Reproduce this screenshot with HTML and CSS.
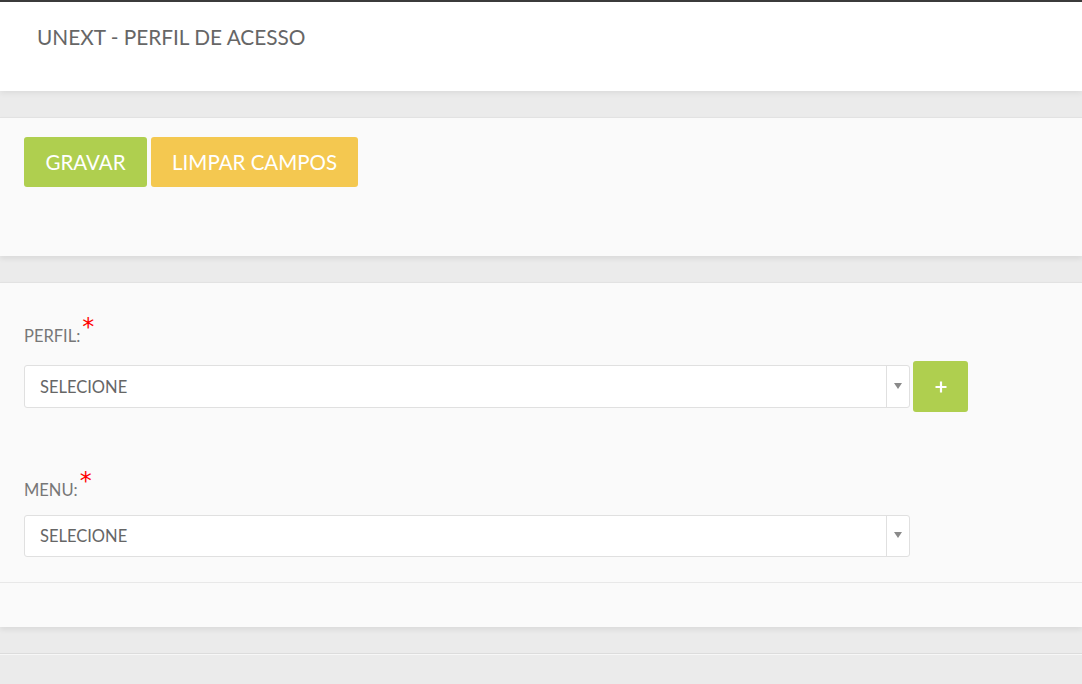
FILE: index.html
```html
<!DOCTYPE html>
<html lang="pt-BR">
<head>
<meta charset="utf-8">
<title>UNEXT - Perfil de Acesso</title>
<link rel="stylesheet" href="styles.css">
</head>
<body>
  <header class="topbar">
    <h1 class="title">UNEXT - PERFIL DE ACESSO</h1>
  </header>

  <main class="main">
    <section class="panel panel-actions">
      <div class="actions">
        <button class="btn btn-green">GRAVAR</button>
        <button class="btn btn-yellow">LIMPAR CAMPOS</button>
      </div>
    </section>

    <section class="panel panel-form">
      <div class="form-body">
        <div class="group group-perfil">
          <label class="label">PERFIL:<span class="req">*</span></label>
          <div class="row">
            <div class="select">
              <span class="select-text">SELECIONE</span>
              <span class="select-arrow"><span class="tri"></span></span>
            </div>
            <button class="btn-add" aria-label="Adicionar">
              <svg width="12" height="12" viewBox="0 0 12 12"><path d="M6 0.5V11.5M0.5 6H11.5" stroke="#fff" stroke-width="2.2" fill="none"/></svg>
            </button>
          </div>
        </div>
        <div class="group group-menu">
          <label class="label">MENU:<span class="req">*</span></label>
          <div class="row">
            <div class="select">
              <span class="select-text">SELECIONE</span>
              <span class="select-arrow"><span class="tri"></span></span>
            </div>
          </div>
        </div>
      </div>
      <div class="form-footer"></div>
    </section>

    <div class="panel-bottom"></div>
  </main>
</body>
</html>
```

FILE: styles.css
```css
* { box-sizing: border-box; }

html, body {
  margin: 0;
  padding: 0;
}

body {
  background: #ebebeb;
  font-family: "Lato", "Open Sans", sans-serif;
  height: 684px;
  overflow: hidden;
}

.topbar {
  position: relative;
  z-index: 2;
  background: #fff;
  border-top: 2px solid #3b3b3b;
  height: 91px;
  padding: 23px 0 0 37px;
  box-shadow: 0 2px 6px rgba(0, 0, 0, 0.07);
}

.title {
  margin: 0;
  font-weight: 400;
  font-size: 20.8px;
  line-height: 24px;
  color: #666;
  letter-spacing: 0;
}

.main {
  padding-top: 26px;
}

.panel {
  background: #fafafa;
  border-top: 1px solid #e2e2e2;
  box-shadow: 0 3px 5px rgba(0, 0, 0, 0.07);
}

.panel-actions {
  height: 139px;
  padding: 19px 24px 0;
  margin-bottom: 26px;
}

.actions {
  display: flex;
  gap: 4px;
}

.btn {
  height: 50px;
  border: 0;
  border-radius: 3px;
  color: #fff;
  font-family: "Lato", "Open Sans", sans-serif;
  font-size: 20.5px;
  font-weight: 400;
  padding: 0 21.5px;
  cursor: pointer;
}

.btn-green { background: #afcf4f; }
.btn-yellow { background: #f4c850; padding: 0 21px; }

.panel-form {
  height: 345px;
  display: flex;
  flex-direction: column;
}

.form-body {
  padding: 43px 24px 0;
  height: 299px;
}

.group-perfil {
  margin-bottom: 68px;
}

.label {
  display: block;
  font-size: 16.5px;
  line-height: 20px;
  height: 20px;
  color: #777;
  margin-bottom: 15px;
}

.req {
  color: #f00;
  font-family: "DejaVu Sans", sans-serif;
  font-size: 24px;
  line-height: 0;
  vertical-align: 7px;
  margin-left: 2px;
}

.row {
  display: flex;
  align-items: center;
  gap: 3px;
}

.select {
  width: 886px;
  height: 43px;
  background: #fff;
  border: 1px solid #e0e0e0;
  border-radius: 3px;
  display: flex;
  align-items: stretch;
}

.group-menu .select { height: 42px; }

.select-text {
  flex: 1;
  display: flex;
  align-items: center;
  padding-left: 15px;
  font-size: 16.5px;
  color: #666;
}

.select-arrow {
  width: 23px;
  border-left: 1px solid #e0e0e0;
  display: flex;
  align-items: center;
  justify-content: center;
}

.tri {
  width: 0;
  height: 0;
  border-left: 4px solid transparent;
  border-right: 4px solid transparent;
  border-top: 6px solid #8a8a8a;
  margin-top: -2px;
}

.btn-add {
  width: 55px;
  height: 51px;
  border: 0;
  border-radius: 3px;
  background: #afcf4f;
  display: flex;
  align-items: center;
  justify-content: center;
  padding: 0;
}

.form-footer {
  border-top: 1px solid #e8e8e8;
  flex: 1;
}

.panel-bottom {
  margin-top: 26px;
  height: 40px;
  border-top: 1px solid #dcdcdc;
  box-shadow: inset 0 1px 0 #f7f7f7;
}
```
